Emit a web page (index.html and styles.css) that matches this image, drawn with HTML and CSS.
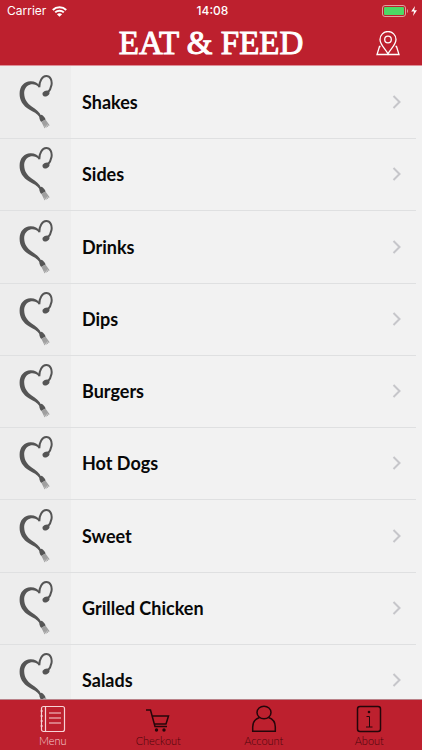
FILE: index.html
```html
<!DOCTYPE html>
<html lang="en">
<head>
<meta charset="utf-8">
<meta name="viewport" content="width=device-width, initial-scale=1">
<title>Eat &amp; Feed</title>
<link rel="stylesheet" href="styles.css">
</head>
<body>
<svg class="defs" aria-hidden="true">
  <symbol id="heart" viewBox="0 0 34 54">
    <path class="ink" d="M20 12.600C17.500 9.600 14 8.700 10.800 9.700C7 10.900 5 14.500 5.200 18.800C5.400 24.300 8.300 28.500 12.700 31.500C16.700 34.200 20.600 36.800 22.400 41.200L20.500 42C18.300 38.500 14.300 36.700 10.200 34.400C4 30.700 0.400 25.500 0.600 18.200C0.800 11 5.300 6.500 11.300 6.200C15.500 6 18.800 7.900 20.900 10.700Z"/>
    <path class="loop" d="M20.400 12.200C20.200 6.300 23.100 1.200 27.200 1.100C31.300 1 33.300 5.500 32.500 10C31.900 13.400 30.600 15.800 28.600 17.800"/>
    <ellipse class="ink" cx="27" cy="18.500" rx="3.600" ry="2.700" transform="rotate(-28 27 18.500)"/>
    <path class="ink" d="M20.300 40.700L22.500 39.800C24.300 40.500 25.900 42.500 26.600 44.600L22.300 47C20.700 45.200 20.100 43 20.300 40.700Z"/>
    <path class="fork" d="M22.300 46.800L26.500 44.500L30.600 50.300L29.800 50.900L27.700 48.800L29.200 51.500L28.400 52L26.500 49.500L27.800 52.300L27 52.700L25.200 50.200L26.300 53L25.500 53.300C24.500 51 23.400 49 22.300 46.800Z"/>
  </symbol>
  <symbol id="chevron" viewBox="0 0 10 14"><path d="M1.500 1L7.500 7L1.500 13"/></symbol>
</svg>
<div class="app">
  <header class="top">
    <div class="status">
      <div class="carrier"><span>Carrier</span>
        <svg class="wifi" viewBox="0 0 15 11" aria-hidden="true"><path d="M0.800 4C4.500 0.400 10.500 0.400 14.200 4M3.200 6.400C5.600 4.100 9.400 4.100 11.800 6.400"/><path class="dot" d="M7.500 10.800L4.900 8.200C6.400 6.900 8.600 6.900 10.100 8.200Z"/></svg>
      </div>
      <time>14:08</time>
      <svg class="battery" viewBox="0 0 36 12" aria-hidden="true"><rect class="case" x="0.500" y="0.500" width="23" height="11" rx="2.500"/><rect class="charge" x="2" y="2" width="20" height="8" rx="1"/><path class="tip" d="M25 4C26.300 4.500 26.300 7.500 25 8Z"/><path class="bolt" d="M33 1L29.200 6.500H32L31 11L35 5.300H32.200Z"/></svg>
    </div>
    <div class="titlebar">
      <h1>EAT &amp; FEED</h1>
      <button class="map" type="button" aria-label="Find a location"><svg viewBox="0 0 24 25" aria-hidden="true"><path d="M12 23C10 18.500 4 14 4 8.500A8 8 0 0 1 20 8.500C20 14 14 18.500 12 23Z"/><circle cx="12" cy="8.500" r="3.300"/><path d="M4.500 15.500H3.500L1 23.500H23L20.500 15.500H19.500"/></svg></button>
    </div>
  </header>
  <main>
    <ul class="list">
      <li><a href="#shakes"><span class="thumb"><svg viewBox="0 0 34 54"><use href="#heart"/></svg></span><span class="label">Shakes</span><svg class="chevron" viewBox="0 0 10 14"><use href="#chevron"/></svg></a></li>
      <li><a href="#sides"><span class="thumb"><svg viewBox="0 0 34 54"><use href="#heart"/></svg></span><span class="label">Sides</span><svg class="chevron" viewBox="0 0 10 14"><use href="#chevron"/></svg></a></li>
      <li><a href="#drinks"><span class="thumb"><svg viewBox="0 0 34 54"><use href="#heart"/></svg></span><span class="label">Drinks</span><svg class="chevron" viewBox="0 0 10 14"><use href="#chevron"/></svg></a></li>
      <li><a href="#dips"><span class="thumb"><svg viewBox="0 0 34 54"><use href="#heart"/></svg></span><span class="label">Dips</span><svg class="chevron" viewBox="0 0 10 14"><use href="#chevron"/></svg></a></li>
      <li><a href="#burgers"><span class="thumb"><svg viewBox="0 0 34 54"><use href="#heart"/></svg></span><span class="label">Burgers</span><svg class="chevron" viewBox="0 0 10 14"><use href="#chevron"/></svg></a></li>
      <li><a href="#hot-dogs"><span class="thumb"><svg viewBox="0 0 34 54"><use href="#heart"/></svg></span><span class="label">Hot Dogs</span><svg class="chevron" viewBox="0 0 10 14"><use href="#chevron"/></svg></a></li>
      <li><a href="#sweet"><span class="thumb"><svg viewBox="0 0 34 54"><use href="#heart"/></svg></span><span class="label">Sweet</span><svg class="chevron" viewBox="0 0 10 14"><use href="#chevron"/></svg></a></li>
      <li><a href="#grilled-chicken"><span class="thumb"><svg viewBox="0 0 34 54"><use href="#heart"/></svg></span><span class="label">Grilled Chicken</span><svg class="chevron" viewBox="0 0 10 14"><use href="#chevron"/></svg></a></li>
      <li><a href="#salads"><span class="thumb"><svg viewBox="0 0 34 54"><use href="#heart"/></svg></span><span class="label">Salads</span><svg class="chevron" viewBox="0 0 10 14"><use href="#chevron"/></svg></a></li>
    </ul>
  </main>
  <nav class="tabs">
    <a class="active" href="#menu" aria-current="page"><svg viewBox="0 0 26 28" aria-hidden="true"><rect x="1.500" y="1.500" width="23" height="25" rx="2"/><path d="M5.500 1.500V26.500M9 8H21M9 13H21M9 18H21M0.500 6H3M0.500 11H3M0.500 16H3M0.500 21H3"/></svg><span>Menu</span></a>
    <a href="#checkout"><svg viewBox="0 0 26 28" aria-hidden="true"><path d="M1 5H5.500L10 21.500H22M7 11H23.500L21 19H9.300"/><circle class="solid" cx="11.500" cy="25" r="1.700"/><circle class="solid" cx="19" cy="25" r="1.700"/></svg><span>Checkout</span></a>
    <a href="#account"><svg viewBox="0 0 26 28" aria-hidden="true"><ellipse cx="13" cy="7.500" rx="7" ry="6.300"/><path d="M8.500 12.500C4 14 1.700 17.500 1.700 22V26.200H24.300V22C24.300 17.500 22 14 17.500 12.500"/></svg><span>Account</span></a>
    <a href="#about"><svg viewBox="0 0 26 28" aria-hidden="true"><rect x="1.500" y="1.500" width="23" height="25" rx="2.500"/><path class="fine" d="M10.500 11.500H13.500V22M10 22H16.500"/><circle class="solid" cx="13" cy="7" r="1.300"/></svg><span>About</span></a>
  </nav>
</div>
</body>
</html>
```
FILE: styles.css
```css
* { box-sizing: border-box; }
body { margin: 0; background: #f2f2f2; font-family: Lato, "Noto Sans", sans-serif; }
a { color: inherit; text-decoration: none; }
.defs { position: absolute; width: 0; height: 0; }
.app { display: flex; flex-direction: column; height: 100vh; }

.top { flex: none; background: #bd202e; color: #fff; border-bottom: 1px solid #dd8f98; }
.status {
  display: grid; grid-template-columns: 1fr auto 1fr; align-items: center;
  height: 22px; padding: 0 4px 0 7px; font: 12px/22px Inter, sans-serif;
}
.carrier { display: flex; align-items: center; gap: 6px; }
.wifi { width: 15px; height: 11px; fill: none; stroke: #fff; stroke-width: 2; }
.wifi .dot { fill: #fff; stroke: none; }
.status time { font-weight: 500; }
.battery { width: 36px; height: 12px; justify-self: end; fill: #fff; }
.battery .case { fill: none; stroke: #dfa0a0; }
.battery .charge { fill: #4cd964; }
.battery .tip { fill: #dfa0a0; }

.titlebar {
  display: grid; grid-template-columns: 1fr auto 1fr; align-items: center;
  height: 43px; padding: 0 22px;
}
.titlebar h1 {
  grid-column: 2; margin: 0; font: 33px/43px "Liberation Serif", serif;
  -webkit-text-stroke: 1px #fff;
}
.map { justify-self: end; padding: 0; border: 0; background: none; }
.map svg { display: block; width: 24px; height: 25px; fill: none; stroke: #fff; stroke-width: 1.3; }

main { flex: 1; min-height: 0; overflow: hidden; }
.list { margin: 0; padding: 0; list-style: none; }
.list a { position: relative; display: flex; align-items: center; height: 72px; }
.list li:nth-child(4n + 3) a { height: 73px; }
.list a::after {
  content: ""; position: absolute; left: 0; right: 6px; bottom: -1px;
  height: 1px; background: #dfe0e1; z-index: 1;
}
.thumb { display: flex; justify-content: center; align-items: center; width: 71px; height: 100%; background: #ededed; }
.thumb svg { width: 34px; height: 54px; }
.ink { fill: #555; }
.loop { fill: none; stroke: #555; stroke-width: 2; }
.fork { fill: #a0a0a0; }
.label { flex: 1; padding-left: 11px; color: #080808; font-size: 18px; font-weight: 700; line-height: 24px; }
.chevron { width: 10px; height: 14px; margin-right: 20px; fill: none; stroke: #c6c6ca; stroke-width: 2; }

.tabs {
  flex: none; display: grid; grid-template-columns: repeat(4, 1fr);
  height: 51px; background: #bd202e; border-top: 1px solid #ba8289; color: #4a060c;
}
.tabs a { display: flex; flex-direction: column; align-items: center; padding-top: 5px; font-size: 11px; font-weight: 300; line-height: 15px; }
.tabs svg { width: 26px; height: 28px; fill: none; stroke: #24060a; stroke-width: 1.5; }
.tabs .solid { fill: #24060a; stroke: none; }
.tabs .fine { stroke-width: 1; }
.tabs .active { color: #f7d3d6; }
.tabs .active svg { stroke: #f7d3d6; stroke-width: 1.2; }
```
